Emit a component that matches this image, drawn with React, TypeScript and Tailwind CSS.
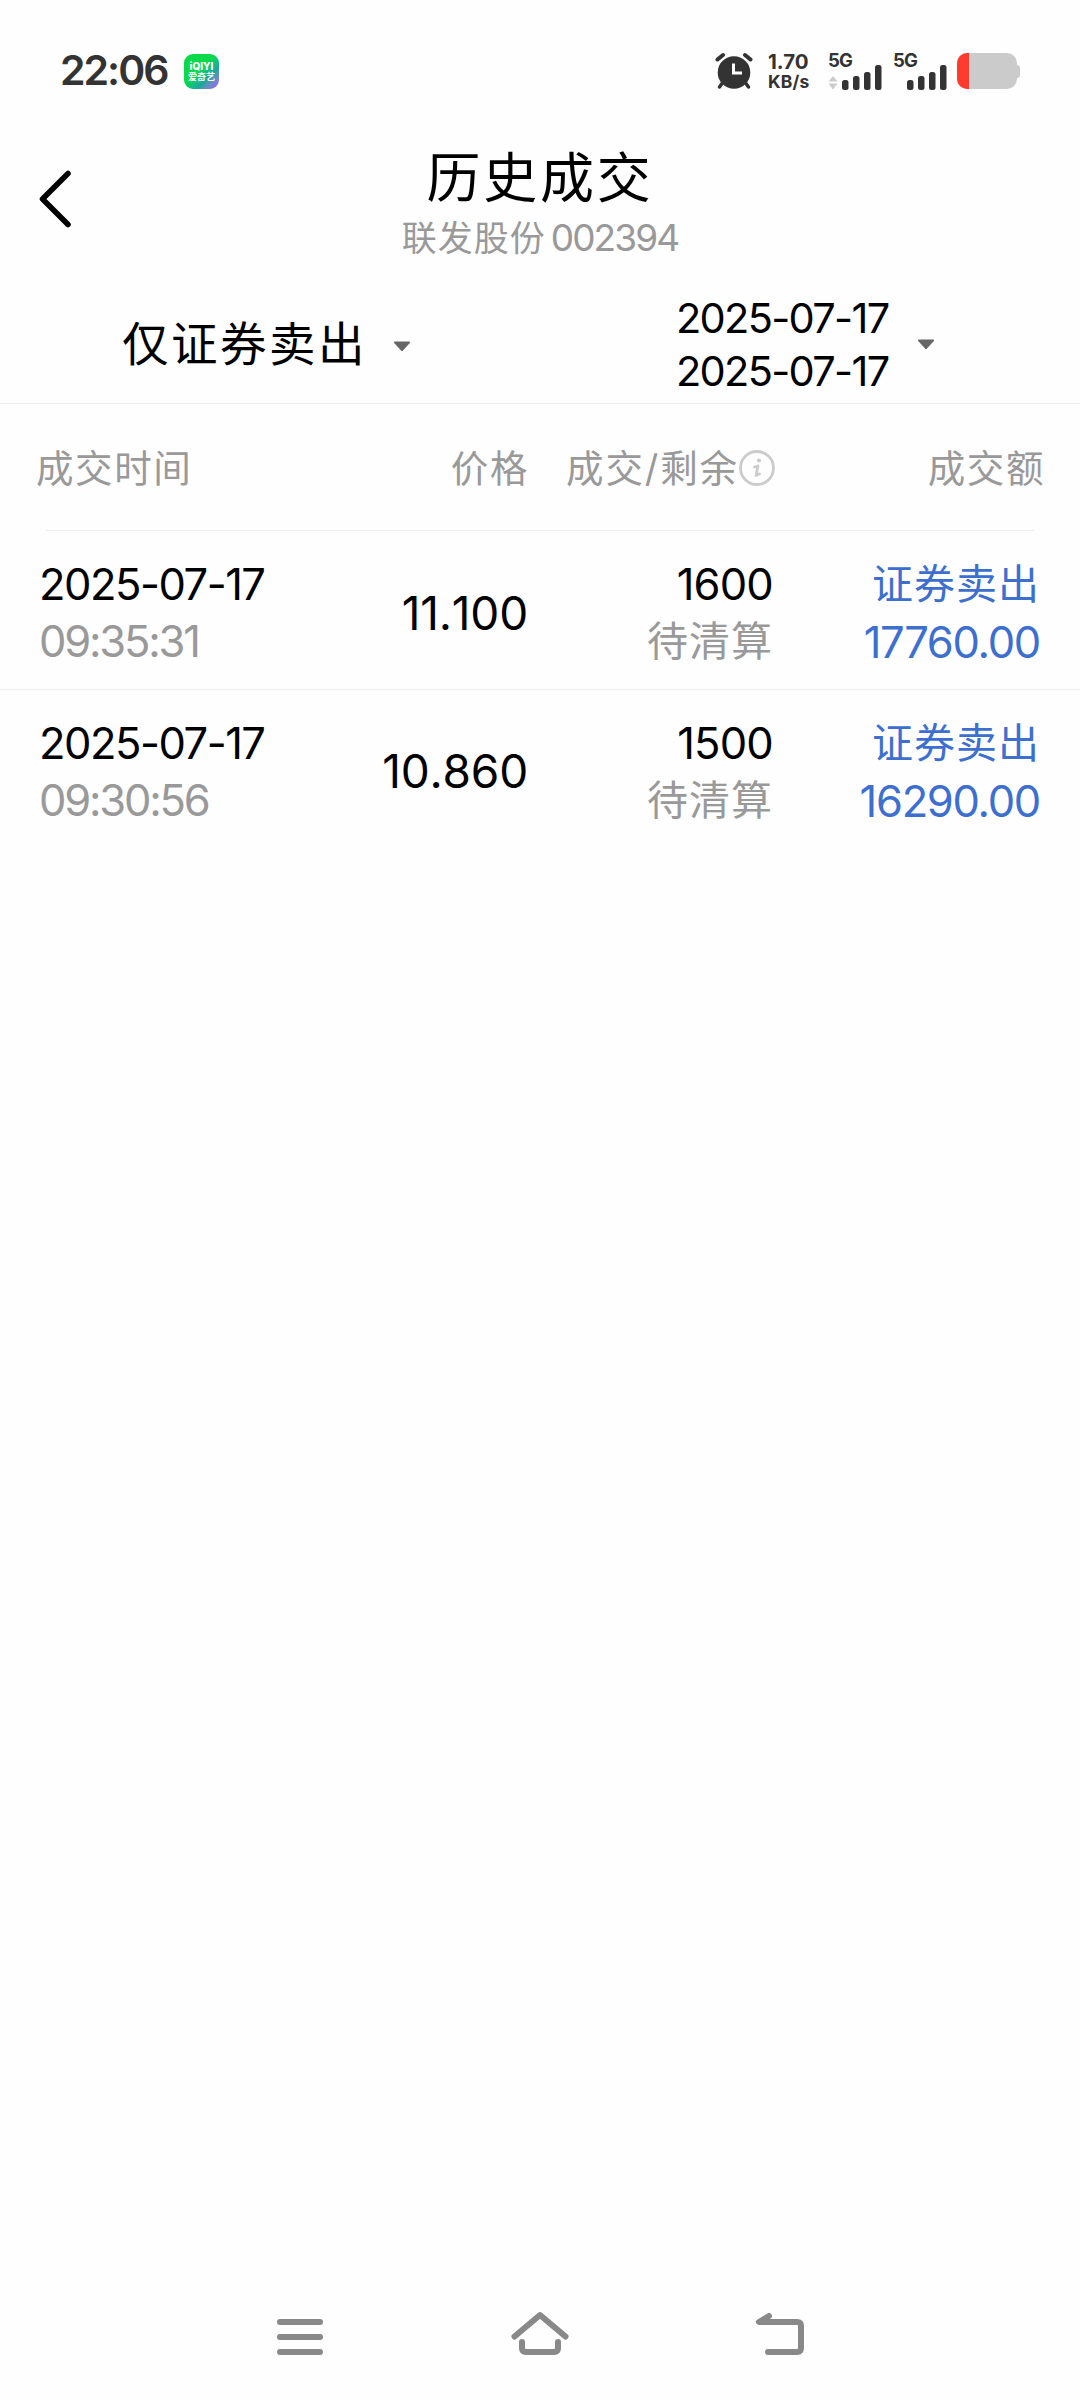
type Deal = {
  date: string;
  time: string;
  price: string;
  volume: string;
  status: string;
  side: string;
  amount: string;
};

const deals: Deal[] = [
  {
    date: '2025-07-17',
    time: '09:35:31',
    price: '11.100',
    volume: '1600',
    status: '待清算',
    side: '证券卖出',
    amount: '17760.00',
  },
  {
    date: '2025-07-17',
    time: '09:30:56',
    price: '10.860',
    volume: '1500',
    status: '待清算',
    side: '证券卖出',
    amount: '16290.00',
  },
];

const AlarmIcon = () => (
  <svg className="h-[38px] w-[38px]" viewBox="0 0 38 38" fill="none" aria-hidden="true">
    <path d="M7 31.5 4.5 35M31 31.5l2.500 3.500" stroke="#333" strokeWidth="3.500" strokeLinecap="round" />
    <path d="M2.500 7.500 8 3M35.500 7.500 30 3" stroke="#333" strokeWidth="4" strokeLinecap="round" />
    <circle cx="19" cy="20.500" r="16.300" fill="#333" />
    <path d="M18.500 11.500v9.500h8.500" stroke="#fff" strokeWidth="3" />
  </svg>
);

const Signal = ({ active }: { active?: boolean }) => (
  <div className="flex h-[37px] w-[54px] flex-col">
    <span className="h-[15px] text-[18.5px] leading-[15px] font-bold tracking-[-0.8px]">5G</span>
    <svg className="-mt-[4px] h-[26px] w-[54px]" viewBox="0 0 54 26" aria-hidden="true">
      {active && <path d="M5 12 9.500 17.500h-9zM5 25.500 9.500 19.500h-9z" fill="#ccc" />}
      <rect x="14" y="16" width="6.500" height="10" rx="2.500" fill="#333" />
      <rect x="25" y="12" width="6.500" height="14" rx="2.500" fill="#333" />
      <rect x="36" y="8" width="6.500" height="18" rx="2.500" fill="#333" />
      <rect x="47" y="1" width="6.500" height="25" rx="2.500" fill="#333" />
    </svg>
  </div>
);

const Battery = () => (
  <div className="flex items-center">
    <div className="h-[36px] w-[60px] overflow-hidden rounded-[10px] bg-[#cbcbcb]">
      <div className="h-full w-[12px] bg-[#ff3b2f]" />
    </div>
    <div className="h-[13px] w-[3px] rounded-r-[3px] bg-[#cbcbcb]" />
  </div>
);

const StatusBar = () => (
  <div className="flex h-[140px] items-center pt-[2px] pr-[60px] pl-[60px] text-[#333]">
    <span className="w-[124px] text-[41px] font-semibold tracking-[-2px]">22:06</span>
    <div className="flex h-[35px] w-[35px] flex-col items-center justify-center rounded-[9px] bg-linear-135 from-[#0bd94a] from-45% via-[#1fa3a0] via-70% to-[#a04dff] text-white">
      <span className="text-[10px] leading-[10px] font-extrabold">iQIYI</span>
      <span className="text-[9px] leading-[11px] font-bold">爱奇艺</span>
    </div>
    <div className="ml-auto flex items-center">
      <AlarmIcon />
      <div className="ml-[15px] flex w-[60px] flex-col font-bold">
        <span className="text-[20.5px] leading-[20px]">1.70</span>
        <span className="text-[17.5px] leading-[19px] tracking-[0.2px]">KB/s</span>
      </div>
      <Signal active />
      <div className="ml-[11px]">
        <Signal />
      </div>
      <div className="ml-[10px]">
        <Battery />
      </div>
    </div>
  </div>
);

const Header = () => (
  <header className="grid h-[144px] grid-cols-[200px_1fr_200px]">
    <button type="button" aria-label="返回" className="h-[117px] pl-[36px]">
      <svg className="h-[62px] w-[38px]" viewBox="0 0 38 62" fill="none">
        <path d="M32 5.500 6.500 31 32 56.500" stroke="#000" strokeWidth="5.500" strokeLinecap="round" strokeLinejoin="round" />
      </svg>
    </button>
    <div className="flex flex-col items-center pt-[3px]">
      <h1 className="text-[54px] leading-[71px] tracking-[2.8px] text-black">历史成交</h1>
      <p className="-mt-[3px] text-[#999] leading-[53px]">
        <span className="text-[35px] tracking-[1px]">联发股份</span>
        <span className="ml-[5px] text-[37px] tracking-[-1.9px]">002394</span>
      </p>
    </div>
  </header>
);

const Caret = () => (
  <svg className="h-[11px] w-[18px]" viewBox="0 0 18 11" aria-hidden="true">
    <path d="M1.500.5h15q1 .5.3 1.500l-6.800 7.500q-1 1-2 0L1.200 2q-.7-1 .3-1.500z" fill="#666" />
  </svg>
);

const Filters = () => (
  <div className="flex h-[120px] border-b border-[#eee]">
    <button type="button" className="flex w-[540px] items-center pt-[2px] pl-[122px]">
      <span className="text-[46.5px] tracking-[2.5px]">仅证券卖出</span>
      <span className="ml-[26px] pt-[3px]">
        <Caret />
      </span>
    </button>
    <button type="button" className="flex w-[540px] items-center pt-[2px] pl-[136px]">
      <span className="flex w-[241px] flex-col text-left text-[41.5px] leading-[53px] tracking-[-1.7px]">
        <span>2025-07-17</span>
        <span>2025-07-17</span>
      </span>
      <Caret />
    </button>
  </div>
);

const InfoIcon = () => (
  <svg className="-mt-[4px] h-[36px] w-[36px]" viewBox="0 0 36 36" fill="none" stroke="#ccc" aria-hidden="true">
    <circle cx="18" cy="18" r="16.500" strokeWidth="2.800" />
    <circle cx="20" cy="10.500" r="2.100" fill="#ccc" stroke="none" />
    <path d="M15.500 17l3.500-1-2 9.500 3.500-1.500" strokeWidth="2.800" strokeLinecap="round" strokeLinejoin="round" />
  </svg>
);

const TableHead = () => (
  <div className="flex h-[126px] items-center pt-[5px] pl-[36px] text-[37.5px] tracking-[1.6px] text-[#999]">
    <span className="w-[220px]">成交时间</span>
    <span className="w-[273px] text-right">价格</span>
    <span className="flex w-[246px] items-center justify-end tracking-[1.9px]">
      成交/剩余
      <InfoIcon />
    </span>
    <span className="w-[270px] text-right">成交额</span>
  </div>
);

const DealRow = ({ deal }: { deal: Deal }) => (
  <div className="flex h-[158px] items-center pt-[5px] pl-[39px] text-[43.5px] leading-[57px]">
    <div className="flex w-[270px] flex-col">
      <span className="tracking-[-1.5px]">{deal.date}</span>
      <span className="tracking-[-2.2px] text-[#999]">{deal.time}</span>
    </div>
    <div className="w-[219px] text-right text-[46px] tracking-[-0.2px] [font-kerning:none]">{deal.price}</div>
    <div className="flex w-[245px] flex-col text-right tracking-[-0.8px]">
      <span>{deal.volume}</span>
      <span className="text-[41px] tracking-[1px] text-[#999]">{deal.status}</span>
    </div>
    <div className="flex w-[267px] flex-col pt-[2px] text-right text-[#3c6fd0]">
      <span className="text-[41px] leading-[56px] tracking-[1px]">{deal.side}</span>
      <span className="leading-[60px] tracking-[-1.3px]">{deal.amount}</span>
    </div>
  </div>
);

const NavBar = () => (
  <nav className="mt-auto flex h-[132px] items-center justify-center gap-[182px]">
    <svg className="h-[60px] w-[60px]" viewBox="0 0 60 60" fill="none" stroke="#898989" strokeWidth="6" strokeLinecap="round">
      <path d="M12 18h40M12 33h40M12 48h40" />
    </svg>
    <svg
      className="h-[60px] w-[60px]"
      viewBox="0 0 60 60"
      fill="none"
      stroke="#898989"
      strokeWidth="6"
      strokeLinecap="round"
      strokeLinejoin="round"
    >
      <path d="M4.500 32.500 30 11l25.500 21.500M12 38v6q0 4 4 4h28q4 0 4-4v-6" />
    </svg>
    <svg
      className="h-[60px] w-[60px]"
      viewBox="0 0 60 60"
      fill="none"
      stroke="#898989"
      strokeWidth="6"
      strokeLinecap="round"
      strokeLinejoin="round"
    >
      <path d="M17 12 7 18h38q4 0 4 4v22q0 4-4 4H16" />
    </svg>
  </nav>
);

export default function App() {
  return (
    <div className="flex h-[2400px] w-[1080px] flex-col bg-[#fefefe] font-['Inter','Noto_Sans_CJK_SC',sans-serif] text-black">
      <StatusBar />
      <Header />
      <Filters />
      <TableHead />
      <div className="mx-[46px] h-px bg-[#eee]" />
      <main className="divide-y divide-[#eee] pt-px">
        {deals.map((deal) => (
          <DealRow key={deal.time} deal={deal} />
        ))}
      </main>
      <NavBar />
    </div>
  );
}
